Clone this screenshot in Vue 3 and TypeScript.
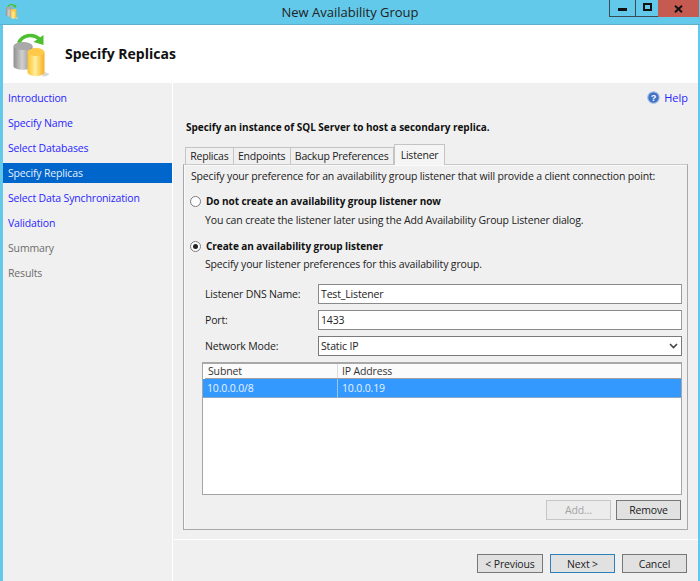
<script setup lang="ts">
const navItems: { label: string; state: string }[] = [
  { label: 'Introduction', state: 'link' },
  { label: 'Specify Name', state: 'link' },
  { label: 'Select Databases', state: 'link' },
  { label: 'Specify Replicas', state: 'active' },
  { label: 'Select Data Synchronization', state: 'link' },
  { label: 'Validation', state: 'link' },
  { label: 'Summary', state: 'off' },
  { label: 'Results', state: 'off' },
]
const tabs = ['Replicas', 'Endpoints', 'Backup Preferences']
</script>

<template>
  <div class="window">
    <header class="titlebar">
      <svg class="app-icon" width="14" height="16" viewBox="0 0 38 46">
        <use href="#dbicon" />
      </svg>
      <span class="title">New Availability Group</span>
      <div class="controls">
        <div class="ctl min"><span class="min-bar"></span></div>
        <div class="ctl max"><span class="max-box"></span></div>
        <div class="ctl close">
          <svg width="9" height="8" viewBox="0 0 9 8"><path d="M1 0.8 L8 7.2 M8 0.8 L1 7.2" stroke="#111" stroke-width="2" /></svg>
        </div>
      </div>
    </header>

    <div class="frame">
      <section class="banner">
        <svg class="banner-icon" width="39" height="46" viewBox="0 0 38 46">
          <defs>
            <linearGradient id="grey" x1="0" x2="1" y1="0" y2="0">
              <stop offset="0" stop-color="#8e8e8e" />
              <stop offset="0.45" stop-color="#d0d0d0" />
              <stop offset="1" stop-color="#8a8a8a" />
            </linearGradient>
            <linearGradient id="gold" x1="0" x2="1" y1="0" y2="0">
              <stop offset="0" stop-color="#fbc02e" />
              <stop offset="0.45" stop-color="#ffef9e" />
              <stop offset="1" stop-color="#f7ae1e" />
            </linearGradient>
            <symbol id="dbicon" viewBox="0 0 38 46">
              <path d="M6 12 C10 4 20 2 27 8" fill="none" stroke="#4cc02e" stroke-width="3.5" />
              <path d="M21 11 L31 4 L31 14 Z" fill="#4cc02e" />
              <path d="M30 40 L37 43 C35 45 33 45.5 30 45.5 Z" fill="#d8d8d8" />
              <path d="M1 15 V35 C1 40 20 40 20 35 V15 Z" fill="url(#grey)" />
              <ellipse cx="10.5" cy="15" rx="9.5" ry="4" fill="#a9a9a9" />
              <path d="M15 21 V41 C15 46.5 32 46.5 32 41 V21 Z" fill="url(#gold)" />
              <ellipse cx="23.5" cy="21" rx="8.5" ry="4" fill="#ffc94a" />
            </symbol>
          </defs>
          <use href="#dbicon" />
        </svg>
        <h1 class="banner-title">Specify Replicas</h1>
      </section>

      <div class="body">
        <nav class="sidebar">
          <div v-for="item in navItems" :key="item.label" class="nav-item" :class="item.state">
            {{ item.label }}
          </div>
        </nav>

        <div class="right">
          <main class="content">
            <div class="help-row">
              <svg width="13" height="13" viewBox="0 0 14 14">
                <circle cx="7" cy="7" r="6.2" fill="#3f72c8" stroke="#a9bfe4" stroke-width="1.2" />
                <text x="7" y="10.6" text-anchor="middle" class="help-q">?</text>
              </svg>
              <span class="help-link">Help</span>
            </div>
            <p class="instruction">Specify an instance of SQL Server to host a secondary replica.</p>

            <div class="tabstrip">
              <div v-for="t in tabs" :key="t" class="tab">{{ t }}</div>
              <div class="tab selected">Listener</div>
            </div>

            <div class="panel">
              <p class="lead">Specify your preference for an availability group listener that will provide a client connection point:</p>

              <div class="radio-row first">
                <span class="radio"></span>
                <span class="radio-label">Do not create an availability group listener now</span>
              </div>
              <p class="hint one">You can create the listener later using the Add Availability Group Listener dialog.</p>

              <div class="radio-row second">
                <span class="radio on"><span class="dot"></span></span>
                <span class="radio-label">Create an availability group listener</span>
              </div>
              <p class="hint">Specify your listener preferences for this availability group.</p>

              <div class="form">
                <label>Listener DNS Name:</label>
                <div class="field">Test_Listener</div>
                <label>Port:</label>
                <div class="field">1433</div>
                <label>Network Mode:</label>
                <div class="field select">
                  <span>Static IP</span>
                  <svg width="9" height="6" viewBox="0 0 9 6"><path d="M1 1 L4.5 4.5 L8 1" fill="none" stroke="#444" stroke-width="1.6" /></svg>
                </div>
              </div>

              <div class="grid-box">
                <div class="grid-row head">
                  <div class="c1">Subnet</div>
                  <div class="c2">IP Address</div>
                </div>
                <div class="grid-row sel">
                  <div class="c1">10.0.0.0/8</div>
                  <div class="c2">10.0.0.19</div>
                </div>
              </div>

              <div class="panel-actions">
                <div class="btn disabled">Add...</div>
                <div class="btn">Remove</div>
              </div>
            </div>
          </main>

          <footer class="footer">
            <div class="btn wide">&lt; Previous</div>
            <div class="btn wide default">Next &gt;</div>
            <div class="btn wide cancel">Cancel</div>
          </footer>
        </div>
      </div>
    </div>
  </div>
</template>

<style>
html, body { margin: 0; padding: 0; }
</style>

<style scoped>
.window {
  width: 700px;
  height: 581px;
  background: #63c9ea;
  display: flex;
  flex-direction: column;
  font-family: "Open Sans", "Noto Sans", sans-serif;
  font-size: 10.5px;
  letter-spacing: -0.155px;
  color: #222;
  overflow: hidden;
}
.titlebar {
  height: 25px;
  flex: none;
  display: flex;
  align-items: flex-start;
  position: relative;
  box-shadow: inset 0 -1px 0 #5fb0cc;
}
.app-icon { margin: 3px 0 0 5px; }
.title {
  position: absolute;
  left: 0;
  right: 0;
  top: 4px;
  text-align: center;
  font-size: 13px;
  line-height: 17px;
  letter-spacing: 0;
  color: #222;
}
.controls { position: absolute; right: 1px; top: 0; display: flex; height: 17px; }
.ctl {
  height: 17px;
  box-sizing: border-box;
  border: 1px solid #3d4a52;
  border-top: 0;
  display: flex;
  align-items: center;
  justify-content: center;
}
.min { width: 26px; border-right: 0; }
.max { width: 23px; border-right: 0; }
.close { width: 41px; background: #c55a50; border: 0; }
.min-bar { width: 9px; height: 3px; background: #111; margin-top: 3px; }
.max-box { border: 2px solid #111; margin-top: -2px; width: 5px; height: 4px; }
.frame {
  flex: 1;
  margin: 0 2px 0 3px;
  display: flex;
  flex-direction: column;
  min-height: 0;
  background: #f0f0f0;
}
.banner {
  height: 58px;
  flex: none;
  background: #fff;
  display: flex;
  align-items: center;
}
.banner-icon { margin: 0 0 0 9px; }
.banner-title {
  margin: -1px 0 0 14px;
  font-size: 14px;
  line-height: 18px;
  font-weight: 700;
  letter-spacing: 0;
  color: #111;
}
.body { flex: 1; display: flex; min-height: 0; }
.sidebar {
  flex: none;
  padding-top: 5px;
  box-sizing: border-box;
  border-right: 1px solid #fff;
  width: 170px;
}
.nav-item {
  height: 20px;
  line-height: 20px;
  margin-bottom: 5px;
  padding-left: 5px;
  white-space: nowrap;
}
.nav-item.link { color: #2a1fff; }
.nav-item.off { color: #6d6d6d; }
.nav-item.active { background: #0066cc; color: #e6f0fb; width: 169px; box-sizing: border-box; }
.right { flex: 1; display: flex; flex-direction: column; min-width: 0; margin-left: 1px; }
.content { flex: 1; min-height: 0; display: flex; flex-direction: column; }
.help-row {
  height: 14px;
  margin-top: 7px;
  padding-right: 10px;
  display: flex;
  justify-content: flex-end;
  align-items: center;
  gap: 4px;
}
.help-q { font-family: "Liberation Sans", sans-serif; font-size: 10px; font-weight: 700; fill: #fff; }
.help-link { color: #2a1fff; font-size: 11px; letter-spacing: 0; }
.instruction {
  margin: 16px 0 0 12px;
  font-size: 10px;
  font-weight: 700;
  line-height: 15px;
  letter-spacing: -0.02px;
  color: #111;
}
.tabstrip {
  margin: 8px 0 0 11px;
  height: 21px;
  display: flex;
  align-items: flex-end;
  position: relative;
  z-index: 1;
}
.tab {
  height: 17px;
  line-height: 17px;
  box-sizing: border-box;
  border: 1px solid #c4c4c4;
  border-bottom: 0;
  padding: 0 4.2px;
  letter-spacing: -0.2px;
  color: #222;
  white-space: nowrap;
}
.tab + .tab { border-left: 0; }
.tab.selected {
  height: 21px;
  line-height: 20px;
  background: #f5f5f5;
  border-left: 1px solid #c4c4c4;
  margin-bottom: -1px;
  padding: 0 6px;
}
.panel {
  margin-left: 9px;
  width: 505px;
  height: 366px;
  box-sizing: border-box;
  border: 1px solid #a8a8ac;
  border-top-color: #c8c8c8;
  box-shadow: inset 1px 1px 0 #fafafa;
  padding: 0 5px 0 7px;
  display: flex;
  flex-direction: column;
}
.lead { margin: 4px 0 0 0; line-height: 15px; }
.radio-row { display: flex; align-items: center; height: 16px; }
.radio-row.first { margin-top: 9px; }
.radio-row.second { margin-top: 10px; }
.radio {
  width: 11px;
  height: 11px;
  box-sizing: border-box;
  border: 1px solid #7b7b7b;
  border-radius: 50%;
  background: #fff;
  display: flex;
  align-items: center;
  justify-content: center;
  margin-left: -1px;
  margin-right: 5px;
}
.dot { width: 5px; height: 5px; border-radius: 50%; background: #222; }
.radio-label { font-weight: 700; font-size: 10px; letter-spacing: -0.06px; color: #111; }
.hint { margin: 3px 0 0 14px; line-height: 15px; }
.hint.one { margin-top: 4px; }
.form {
  margin: 12px 0 0 14px;
  display: grid;
  grid-template-columns: 113px 1fr;
  row-gap: 6px;
  align-items: center;
}
.form label { line-height: 20px; }
.field {
  height: 20px;
  line-height: 18px;
  box-sizing: border-box;
  background: #fff;
  border: 1px solid #8a8a8a;
  border-right-color: #9a9a9a;
  padding-left: 2px;
  color: #222;
}
.select {
  display: flex;
  align-items: center;
  justify-content: space-between;
  padding-right: 3px;
  border-color: #7a7a7a;
}
.grid-box {
  margin: 6px 0 0 11px;
  height: 133px;
  box-sizing: border-box;
  background: #fff;
  border: 1px solid #a5a5a5;
  border-top: 2px solid #a8a8a8;
  flex: none;
}
.grid-row { display: flex; }
.head {
  height: 14px;
  line-height: 14px;
  background: #fbfbfb;
  border-bottom: 1px solid #a0a0a0;
  margin-left: 2px;
  color: #333;
}
.head .c1 { width: 133px; border-right: 1px solid #dcdcdc; padding-left: 3px; box-sizing: border-box; }
.head .c2 { padding-left: 4px; }
.sel {
  height: 19px;
  line-height: 18px;
  background: #3399ff;
  color: #e8f2fc;
  box-shadow: inset 0 -1px 0 #8aa6c4;
}
.sel .c1 { width: 135px; padding-left: 4px; border-right: 1px solid #9cc6ee; box-sizing: border-box; }
.sel .c2 { padding-left: 4px; }
.panel-actions {
  margin: 5px 1px 0 0;
  display: flex;
  justify-content: flex-end;
  gap: 5px;
}
.btn {
  width: 65px;
  height: 20px;
  line-height: 18px;
  box-sizing: border-box;
  text-align: center;
  background: #e1e1e1;
  border: 1px solid #777;
  color: #222;
}
.btn.disabled { background: #ececec; border-color: #c6c6c6; color: #a4a4a4; }
.footer {
  height: 42px;
  flex: none;
  border-top: 1px solid #fff;
  box-sizing: border-box;
  padding: 14px 11px 0 0;
  display: flex;
  justify-content: flex-end;
}
.wide { width: 66px; height: 19px; line-height: 18px; }
.default { margin-left: 7px; width: 65px; border-color: #2f7fb8; }
.cancel { margin-left: 7px; width: 65px; }
</style>
